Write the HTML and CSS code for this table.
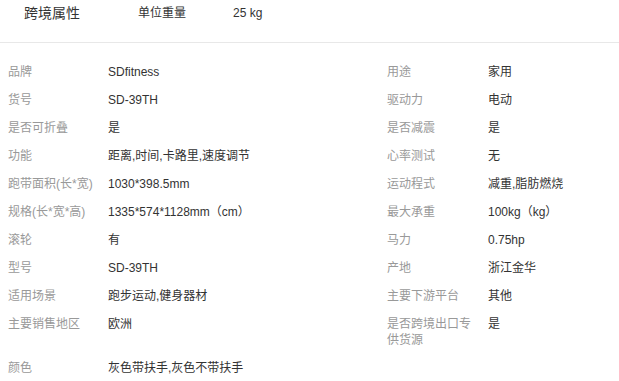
FILE: index.html
```html
<!DOCTYPE html>
<html lang="zh">
<head>
<meta charset="utf-8">
<title>跨境属性</title>
<link rel="stylesheet" href="styles.css">
</head>
<body>
<div class="head">
  <h2 class="title">跨境属性</h2>
  <span class="head-label">单位重量</span>
  <span class="head-value">25 kg</span>
</div>
<div class="attrs">
  <div class="k">品牌</div><div class="v">SDfitness</div><div class="k">用途</div><div class="v">家用</div>
  <div class="k">货号</div><div class="v">SD-39TH</div><div class="k">驱动力</div><div class="v">电动</div>
  <div class="k">是否可折叠</div><div class="v">是</div><div class="k">是否减震</div><div class="v">是</div>
  <div class="k">功能</div><div class="v">距离,时间,卡路里,速度调节</div><div class="k">心率测试</div><div class="v">无</div>
  <div class="k">跑带面积(长*宽)</div><div class="v">1030*398.5mm</div><div class="k">运动程式</div><div class="v">减重,脂肪燃烧</div>
  <div class="k">规格(长*宽*高)</div><div class="v">1335*574*1128mm（cm）</div><div class="k">最大承重</div><div class="v">100kg（kg）</div>
  <div class="k">滚轮</div><div class="v">有</div><div class="k">马力</div><div class="v">0.75hp</div>
  <div class="k">型号</div><div class="v">SD-39TH</div><div class="k">产地</div><div class="v">浙江金华</div>
  <div class="k">适用场景</div><div class="v">跑步运动,健身器材</div><div class="k">主要下游平台</div><div class="v">其他</div>
  <div class="k">主要销售地区</div><div class="v">欧洲</div><div class="k">是否跨境出口专供货源</div><div class="v">是</div>
  <div class="k">颜色</div><div class="v">灰色带扶手,灰色不带扶手</div><div class="k"></div><div class="v"></div>
</div>
</body>
</html>
```
FILE: styles.css
```css
html, body {
  margin: 0;
  padding: 0;
  background: #fff;
}
body {
  font-family: "Liberation Sans", Arial, "Noto Sans CJK SC", sans-serif;
  font-size: 12px;
  color: #333;
}
.head {
  display: flex;
  align-items: center;
  height: 26px;
  padding: 0 0 16px 24px;
  border-bottom: 1px solid #e8e8e8;
}
.title {
  margin: 0;
  font-size: 14px;
  font-weight: normal;
  color: #333;
  line-height: 26px;
}
.head-label {
  margin-left: 58px;
  line-height: 26px;
}
.head-value {
  margin-left: 47px;
  line-height: 26px;
}
.attrs {
  display: grid;
  grid-template-columns: 100px 279px 101px 1fr;
  padding: 15px 8px 0 8px;
  line-height: 16px;
}
.k, .v {
  padding: 6px 0;
}
.k {
  color: #999;
  padding-right: 10px;
}
.v {
  color: #333;
}
```
